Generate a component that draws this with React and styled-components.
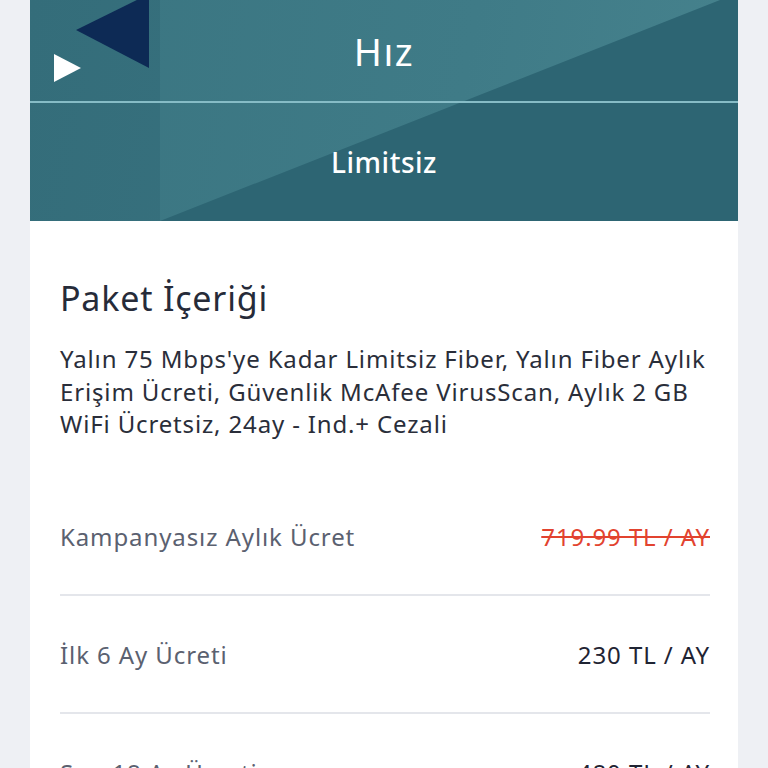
import React from "react";
import styled, { createGlobalStyle } from "styled-components";

const Global = createGlobalStyle`
  html, body { margin: 0; padding: 0; background: #eef0f4; }
  body { font-family: "Noto Sans", "Open Sans", sans-serif; overflow: hidden; }
`;

const Page = styled.div`
  width: 768px;
  height: 768px;
  padding: 0 30px;
  box-sizing: border-box;
  background: #eef0f4;
`;

const Card = styled.div`
  background: #ffffff;
  display: flex;
  flex-direction: column;
  min-height: 768px;
`;

const Hero = styled.div`
  position: relative;
  overflow: hidden;
  height: 221px;
  display: flex;
  flex-direction: column;
  background: #2d6573;
  &::before {
    content: "";
    position: absolute;
    inset: 0;
    background: linear-gradient(100deg, #3a7581 0%, #3f7b87 60%, #46828d 100%);
    clip-path: polygon(0 0, 690px 0, 130px 221px, 0 221px);
  }
  &::after {
    content: "";
    position: absolute;
    top: 0;
    bottom: 0;
    left: 0;
    width: 130px;
    background: rgba(20, 60, 75, 0.12);
  }
`;

const HeroRow = styled.div`
  position: relative;
  z-index: 1;
  display: flex;
  align-items: center;
  justify-content: center;
  color: #ffffff;
  height: ${(p) => p.$h}px;
  box-sizing: border-box;
  font-size: ${(p) => p.$size}px;
  font-weight: ${(p) => p.$weight};
  letter-spacing: ${(p) => p.$ls || 0}px;
  border-bottom: ${(p) => (p.$line ? "2px solid #86bcc6" : "none")};
`;

const Deco = styled.svg`
  position: absolute;
  left: 0;
  top: 0;
  z-index: 2;
`;

const Body = styled.div`
  padding: 57px 28px 0 30px;
  display: flex;
  flex-direction: column;
`;

const Title = styled.h2`
  margin: 0;
  font-size: 34px;
  line-height: 41px;
  font-weight: 400;
  letter-spacing: 0.8px;
  color: #262b39;
`;

const Desc = styled.p`
  margin: 24px 0 37px;
  font-size: 24px;
  line-height: 32.5px;
  color: #2a2e3a;
  letter-spacing: 0.85px;
`;

const Row = styled.div`
  display: flex;
  justify-content: space-between;
  align-items: center;
  padding: 43px 0 41px;
  border-bottom: 2px solid #e4e6eb;
  font-size: 24px;
  line-height: 32px;
  letter-spacing: 0.9px;
`;

const Label = styled.span`
  color: #5b6170;
`;

const Value = styled.span`
  color: ${(p) => (p.$old ? "#e2432f" : "#1f2433")};
  text-decoration: ${(p) => (p.$old ? "line-through" : "none")};
  text-decoration-thickness: 2px;
`;

const rows = [
  { label: "Kampanyasız Aylık Ücret", value: "719.99 TL / AY", old: true },
  { label: "İlk 6 Ay Ücreti", value: "230 TL / AY" },
  { label: "Son 18 Ay Ücreti", value: "480 TL / AY" },
];

export default function App() {
  return (
    <>
      <Global />
      <Page>
        <Card>
          <Hero>
            <Deco width="160" height="100" viewBox="0 0 160 100">
              <polygon points="46,30 119,-6 119,68" fill="#0d2a55" />
              <polygon points="24,54 24,82 51,68" fill="#ffffff" />
            </Deco>
            <HeroRow $h={103} $size={38} $weight={400} $ls={1.5} $line>
              Hız
            </HeroRow>
            <HeroRow $h={118} $size={28} $weight={500} $ls={0.5}>
              Limitsiz
            </HeroRow>
          </Hero>
          <Body>
            <Title>Paket İçeriği</Title>
            <Desc>
              Yalın 75 Mbps'ye Kadar Limitsiz Fiber, Yalın Fiber Aylık Erişim
              Ücreti, Güvenlik McAfee VirusScan, Aylık 2 GB WiFi Ücretsiz, 24ay
              - Ind.+ Cezali
            </Desc>
            {rows.map((r) => (
              <Row key={r.label}>
                <Label>{r.label}</Label>
                <Value $old={r.old}>{r.value}</Value>
              </Row>
            ))}
          </Body>
        </Card>
      </Page>
    </>
  );
}
